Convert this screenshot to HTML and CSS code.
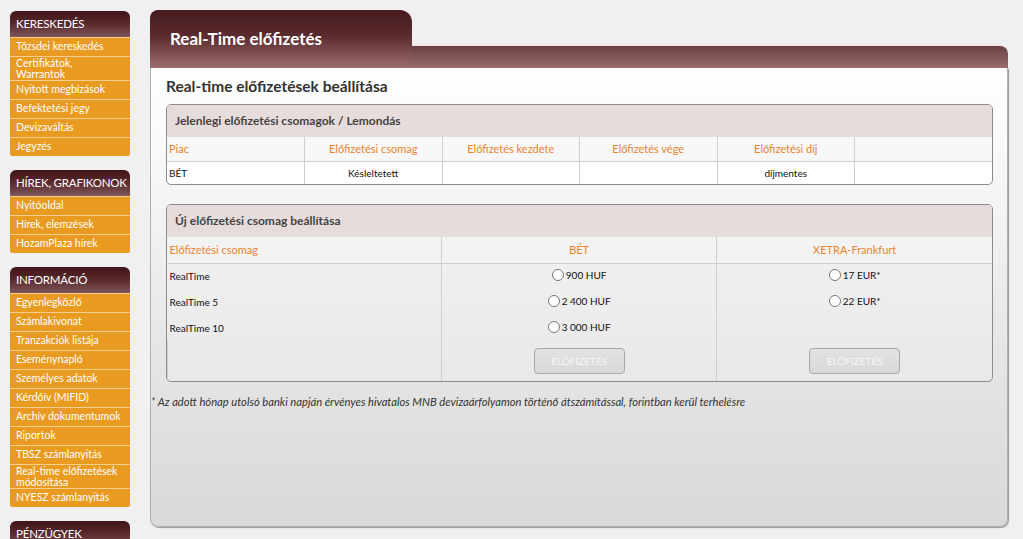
FILE: index.html
```html
<!DOCTYPE html>
<html lang="hu">
<head>
<meta charset="utf-8">
<title>Real-Time előfizetés</title>
<link rel="stylesheet" href="styles.css">
</head>
<body>
<div class="page">
  <nav class="sidebar">
    <div class="group">
      <div class="group-title">KERESKEDÉS</div>
      <a class="item">Tőzsdei kereskedés</a>
      <a class="item two">Certifikátok, Warrantok</a>
      <a class="item">Nyitott megbízások</a>
      <a class="item">Befektetési jegy</a>
      <a class="item">Devizaváltás</a>
      <a class="item">Jegyzés</a>
    </div>
    <div class="group">
      <div class="group-title">HÍREK, GRAFIKONOK</div>
      <a class="item">Nyitóoldal</a>
      <a class="item">Hírek, elemzések</a>
      <a class="item">HozamPlaza hírek</a>
    </div>
    <div class="group">
      <div class="group-title">INFORMÁCIÓ</div>
      <a class="item">Egyenlegközlő</a>
      <a class="item">Számlakivonat</a>
      <a class="item">Tranzakciók listája</a>
      <a class="item">Eseménynapló</a>
      <a class="item">Személyes adatok</a>
      <a class="item">Kérdőív (MIFID)</a>
      <a class="item">Archív dokumentumok</a>
      <a class="item">Riportok</a>
      <a class="item">TBSZ számlanyitás</a>
      <a class="item two">Real-time előfizetések módosítása</a>
      <a class="item">NYESZ számlanyitás</a>
    </div>
    <div class="group">
      <div class="group-title">PÉNZÜGYEK</div>
    </div>
  </nav>

  <main class="main">
    <div class="tabbar">
      <div class="tab">Real-Time előfizetés</div>
      <div class="tab-rest"></div>
    </div>
    <div class="panel">
      <h1 class="heading">Real-time előfizetések beállítása</h1>

      <section class="box">
        <div class="box-head">Jelenlegi előfizetési csomagok / Lemondás</div>
        <table class="grid current">
          <tr class="hrow">
            <th class="left">Piac</th>
            <th>Előfizetési csomag</th>
            <th>Előfizetés kezdete</th>
            <th>Előfizetés vége</th>
            <th>Előfizetési díj</th>
            <th></th>
          </tr>
          <tr class="drow">
            <td class="left">BÉT</td>
            <td>Késleltetett</td>
            <td></td>
            <td></td>
            <td>díjmentes</td>
            <td></td>
          </tr>
        </table>
      </section>

      <section class="box new">
        <div class="box-head">Új előfizetési csomag beállítása</div>
        <table class="grid newtab">
          <tr class="hrow">
            <th class="left">Előfizetési csomag</th>
            <th>BÉT</th>
            <th>XETRA-Frankfurt</th>
          </tr>
          <tr class="prow">
            <td class="left">RealTime</td>
            <td><label class="opt"><input type="radio" name="bet">900 HUF</label></td>
            <td><label class="opt"><input type="radio" name="xetra">17 EUR*</label></td>
          </tr>
          <tr class="prow">
            <td class="left">RealTime 5</td>
            <td><label class="opt"><input type="radio" name="bet">2 400 HUF</label></td>
            <td><label class="opt"><input type="radio" name="xetra">22 EUR*</label></td>
          </tr>
          <tr class="prow">
            <td class="left">RealTime 10</td>
            <td><label class="opt"><input type="radio" name="bet">3 000 HUF</label></td>
            <td></td>
          </tr>
          <tr class="brow">
            <td></td>
            <td><button class="btn" disabled>ELŐFIZETÉS</button></td>
            <td><button class="btn" disabled>ELŐFIZETÉS</button></td>
          </tr>
        </table>
      </section>

      <p class="note">* Az adott hónap utolsó banki napján érvényes hivatalos MNB devizaárfolyamon történő átszámítással, forintban kerül terhelésre</p>
    </div>
  </main>
</div>
</body>
</html>
```

FILE: styles.css
```css
* { box-sizing: border-box; }
html, body {
  margin: 0;
  padding: 0;
  background: #f0f0f0;
  font-family: Lato, "Open Sans", "DejaVu Sans", sans-serif;
  overflow: hidden;
}
.page {
  display: flex;
  align-items: flex-start;
  padding: 10px 0 0 10px;
  height: 539px;
}

/* Sidebar */
.sidebar {
  width: 120px;
  flex: none;
  margin-top: 1px;
  margin-right: 20px;
  display: flex;
  flex-direction: column;
  gap: 14px;
}
.group {
  display: flex;
  flex-direction: column;
}
.group-title {
  height: 26px;
  line-height: 26px;
  padding-left: 6px;
  color: #fff;
  font-size: 11.5px;
  letter-spacing: -0.2px;
  white-space: nowrap;
  border-radius: 6px 6px 0 0;
  background: linear-gradient(#3f1418 0%, #5a2a2e 50%, #80575a 100%);
}
.item {
  display: block;
  background: #e99a20;
  color: #fff;
  font-size: 10.5px;
  line-height: 11px;
  padding: 3px 6px 0;
  height: 19px;
  overflow: hidden;
  white-space: nowrap;
  border-top: 1px solid #f7cf8d;
}
.item.two { padding: 1px 6px 0; height: 24px; white-space: normal; }
.group .item:last-child { border-radius: 0 0 2px 2px; }

/* Main */
.main {
  width: 858px;
  flex: none;
  display: flex;
  flex-direction: column;
}
.tabbar {
  display: flex;
  align-items: flex-end;
  height: 58px;
}
.tab {
  width: 262px;
  height: 58px;
  border-radius: 8px 12px 0 0;
  background: linear-gradient(#451a1e 0%, #5b2b2f 45%, #7e5052 75%, #9b6d6d 100%);
  color: #fff;
  font-size: 17px;
  font-weight: bold;
  padding: 18px 0 0 20px;
}
.tab-rest {
  flex: 1;
  height: 23px;
  border-radius: 0 8px 0 0;
  background: linear-gradient(#6a3f41 0%, #82575a 50%, #9b6d6d 100%);
  border-top: 1px solid #f4e4e2;
}
.panel {
  height: 459px;
  background: linear-gradient(#ffffff 0%, #f6f6f6 25%, #e6e6e6 60%, #d9d9d9 100%);
  border: 1px solid #b0b0b0;
  border-top: none;
  border-radius: 0 0 8px 8px;
  box-shadow: 1px 1px 1px #9a9a9a;
  padding: 9px 14px 0 15px;
}
.heading {
  margin: 0 0 9px;
  font-size: 15.5px;
  font-weight: bold;
  color: #333;
  line-height: 18px;
}

.box {
  border: 1px solid #8c8c8c;
  border-radius: 5px;
  overflow: hidden;
  background: #fff;
}
.box.new {
  margin-top: 19px;
  background: linear-gradient(#f3f3f3, #e8e8e8);
}
.box-head {
  height: 32px;
  line-height: 31px;
  padding-left: 8px;
  background: #e6dcdb;
  color: #444;
  font-size: 12px;
  font-weight: bold;
}
.grid {
  width: 100%;
  border-collapse: collapse;
  table-layout: fixed;
  font-size: 10px;
}
.grid th {
  color: #e8842f;
  font-weight: normal;
  font-size: 11px;
  height: 24px;
  text-align: center;
  padding: 0;
  border-left: 1px solid #cfcfcf;
  border-bottom: 1px solid #cfcfcf;
  background: #f7f7f7;
}
.grid td {
  height: 23px;
  text-align: center;
  padding: 0;
  border-left: 1px solid #cfcfcf;
  color: #111;
}
.grid .left { text-align: left; padding-left: 2px; border-left: none; }
.newtab th { height: 26px; background: #f3f3f3; }
.newtab th:first-child { width: 274px; }
.newtab td { height: 26px; }
.newtab .brow td { height: 40px; }
.opt {
  display: inline-flex;
  align-items: center;
  gap: 2px;
}
.opt input {
  margin: 0;
  width: 12px;
  height: 12px;
}
.btn {
  width: 91px;
  height: 26px;
  border: 1px solid #a8a8a8;
  border-radius: 4px;
  background: linear-gradient(#e2e2e2, #d8d8d8);
  color: #f7f7f7;
  font-family: inherit;
  font-size: 10px;
  padding: 0;
}
.note {
  margin: 13px 0 0 -15px;
  font-size: 11.2px;
  font-style: italic;
  color: #333;
}
```
